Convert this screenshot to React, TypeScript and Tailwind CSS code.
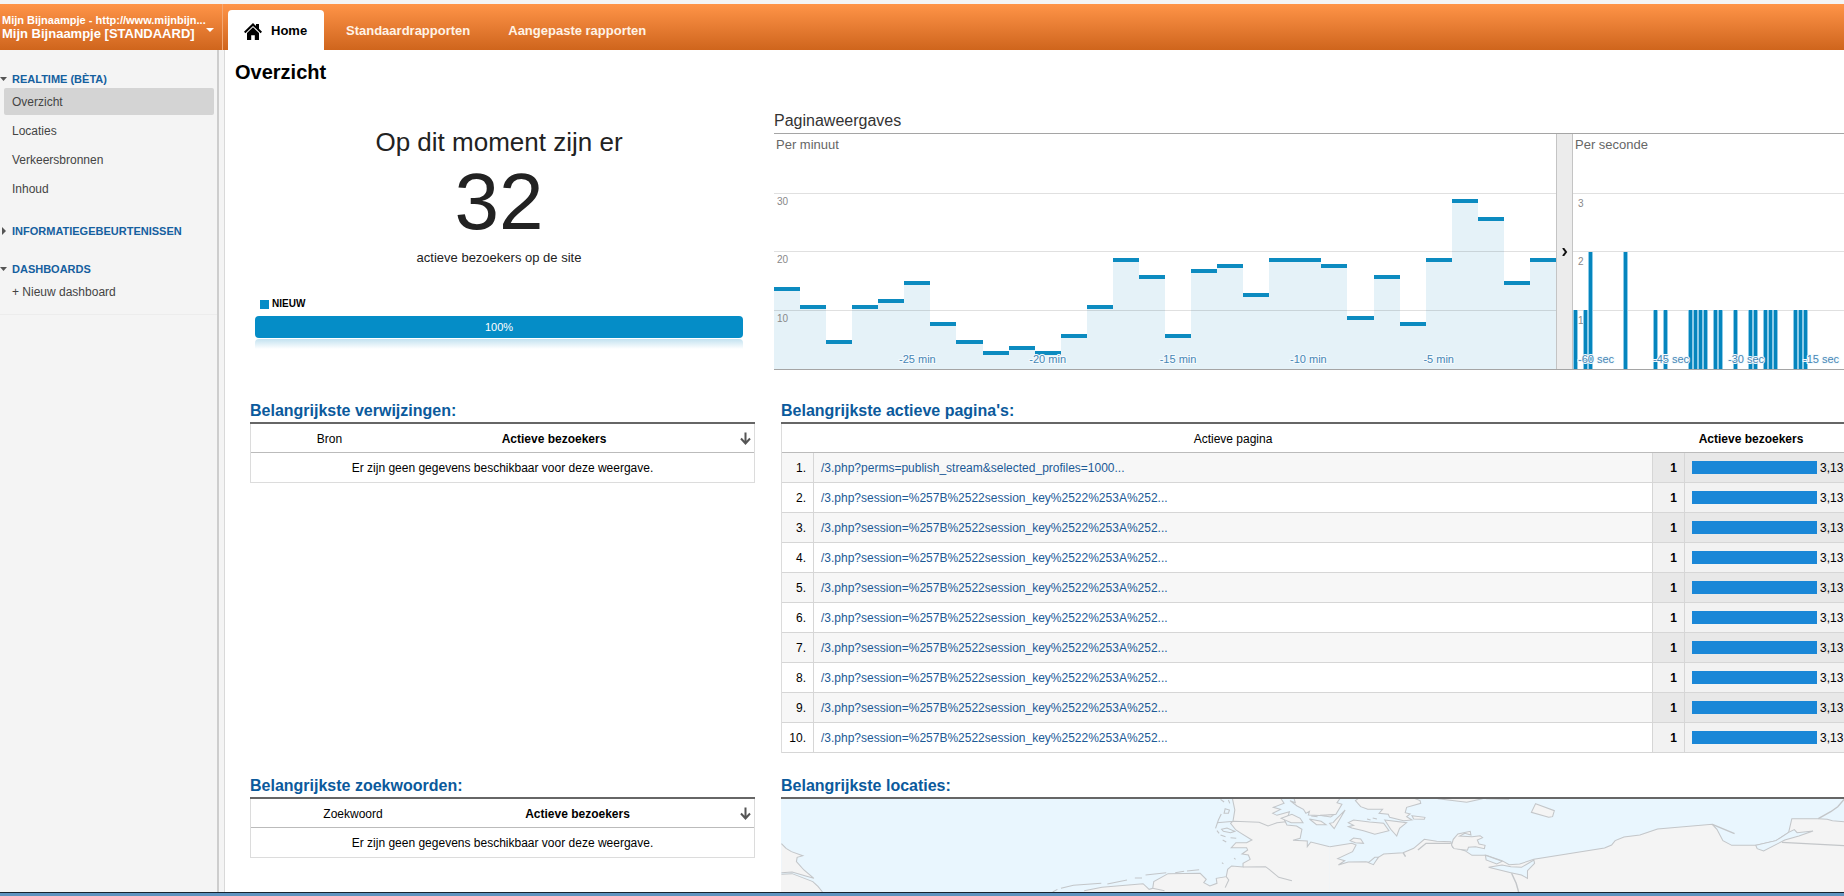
import type { ReactNode } from 'react';

const PER_MINUTE = [
  14, 11, 5, 11, 12, 15, 8, 5, 3, 4, 3, 6, 11, 19, 16,
  6, 17, 18, 13, 19, 19, 18, 9, 16, 8, 19, 29, 26, 15, 19,
];

// [second slot, views]
const PER_SECOND: [number, number][] = [
  [0, 1], [2, 1], [3, 2], [10, 2], [16, 1], [18, 1], [23, 1], [24, 1], [25, 1], [26, 1],
  [28, 1], [29, 1], [32, 1], [35, 1], [36, 1], [38, 1], [39, 1], [40, 1], [44, 1], [45, 1], [46, 1],
];

const SESSION_URL = '/3.php?session=%257B%2522session_key%2522%253A%252...';
const PAGES = ['/3.php?perms=publish_stream&selected_profiles=1000...', ...Array<string>(9).fill(SESSION_URL)];

const CHART_H = 235;
const GRID_Y  = [59, 117, 176];

/* ─── Header ─── */

function HomeIcon() {
  return (
    <svg width="18" height="17" viewBox="0 0 18 17" aria-hidden="true">
      <path d="M9 0 12 2.900V1h3v4.800l3 2.900-1.400 1.500L9 2.900 1.400 10.200 0 8.700z" fill="#000" />
      <path d="M9 4.200 15 10v7h-4.200v-4.800H7.200V17H3v-7z" fill="#000" />
    </svg>
  );
}

function Header() {
  return (
    <header className="flex h-[46px] bg-linear-to-b from-[#ff9447] to-[#cf651c] text-white">
      <button className="flex w-[223px] shrink-0 items-center border-r border-[#f3a873] pt-[2px] pl-[2px] text-left font-bold">
        <span className="whitespace-nowrap">
          <span className="block text-[11px] leading-3">Mijn Bijnaampje - http://www.mijnbijn...</span>
          <span className="block text-[13px] leading-4">Mijn Bijnaampje [STANDAARD]</span>
        </span>
        <svg className="mt-1" width="8" height="4" viewBox="0 0 8 4" aria-hidden="true"><path d="M0 0h8L4 4z" fill="#fff" /></svg>
      </button>
      <nav className="flex items-end pl-[5px] text-[13px] font-bold">
        <a href="#home" className="flex h-10 w-24 items-center gap-[9px] rounded-t bg-white pt-[2px] pl-4 text-black">
          <HomeIcon />
          Home
        </a>
        <a href="#standaard" className="flex h-10 items-center pt-[2px] pl-[22px] text-[#fff3e6]">Standaardrapporten</a>
        <a href="#aangepast" className="flex h-10 items-center pt-[2px] pl-[38px] text-[#fff3e6]">Aangepaste rapporten</a>
      </nav>
    </header>
  );
}

/* ─── Sidebar ─── */

function SidebarHeading({ open, children }: { open?: boolean; children: ReactNode }) {
  return (
    <button className="flex h-[18px] w-full items-center text-left text-[11px] font-bold text-[#15609f]">
      <svg className="w-3 shrink-0" height="8" viewBox="0 0 12 8" aria-hidden="true">
        <path d={open ? 'M0 2h7L3.500 6z' : 'M2 0v8l4-4z'} fill="#555" />
      </svg>
      {children}
    </button>
  );
}

function Sidebar() {
  return (
    <aside className="flex w-[225px] shrink-0 border-r border-[#d9d9d9] bg-[#f4f4f4]">
      <div className="w-[217px] pt-5 text-[#444]">
        <SidebarHeading open>REALTIME (BÈTA)</SidebarHeading>
        <ul className="text-xs">
          {['Overzicht', 'Locaties', 'Verkeersbronnen', 'Inhoud'].map((item, i) => (
            <li key={item} className="mb-[2px] pr-[3px] pl-1">
              <a
                href={`#${item}`}
                className={`block h-[27px] rounded-xs pl-2 leading-[28px] ${i === 0 ? 'bg-[#d4d4d4]' : ''}`}
              >
                {item}
              </a>
            </li>
          ))}
        </ul>
        <div className="mt-5"><SidebarHeading>INFORMATIEGEBEURTENISSEN</SidebarHeading></div>
        <div className="mt-5"><SidebarHeading open>DASHBOARDS</SidebarHeading></div>
        <a href="#nieuw" className="block border-b border-[#ececec] pb-2 pl-3 text-xs leading-[28px]">+ Nieuw dashboard</a>
      </div>
      <div className="w-[2px] bg-[#cdcdcd]" />
    </aside>
  );
}

/* ─── Realtime widgets ─── */

function ActiveVisitors() {
  return (
    <section className="pt-[17px] pr-3 pl-[5px] text-center text-[#222]">
      <p className="text-[26px] leading-8">Op dit moment zijn er</p>
      <p className="mt-1 text-[80px] leading-[80px]">32</p>
      <p className="mt-[6px] text-[13px] leading-5">actieve bezoekers op de site</p>
      <div className="mt-7 flex items-center gap-[3px] pl-[5px] text-[10px] leading-4 font-bold text-black">
        <span className="h-[9px] w-[9px] bg-[#058dc7]" />
        NIEUW
      </div>
      <div className="mt-1 h-[22px] rounded bg-[#058dc7] text-[11px] leading-[22px] text-white">100%</div>
      <div className="mt-px h-[10px] rounded-t bg-linear-to-b from-[#c3e2f0] to-white" />
    </section>
  );
}

function GridLines({ labels, labelX, labelY }: { labels: string[]; labelX: number; labelY: number }) {
  return (
    <>
      {GRID_Y.map((y, i) => (
        <g key={y}>
          <rect x="0" y={y} width="100%" height="1" fill="#000" fillOpacity="0.12" />
          <text x={labelX} y={y + labelY} fill="#888" className="text-[10px]">{labels[i]}</text>
        </g>
      ))}
    </>
  );
}

function AxisLabel({ x, anchor, children }: { x: number; anchor: 'middle' | 'start'; children: string }) {
  return (
    <text
      x={x} y={229} textAnchor={anchor} fill="#4686b5"
      stroke="#f4fafd" strokeWidth="2" paintOrder="stroke" className="text-[11px]"
    >
      {children}
    </text>
  );
}

function MinuteChart() {
  const barW = 782 / 30;
  return (
    <svg width="782" height={CHART_H} className="block" role="img" aria-label="Per minuut">
      {PER_MINUTE.map((v, i) => {
        const x = Math.round(i * barW);
        const w = Math.round((i + 1) * barW) - x;
        const y = Math.round(CHART_H - v * 5.86);
        return (
          <g key={i}>
            <rect x={x} y={y} width={w} height={CHART_H - y} fill="#e5f2f8" />
            <rect x={x} y={y} width={w} height="4" fill="#0c8bc0" />
          </g>
        );
      })}
      <GridLines labels={['30', '20', '10']} labelX={3} labelY={12} />
      {[25, 20, 15, 10, 5].map(m => (
        <AxisLabel key={m} x={(30.5 - m) * barW} anchor="middle">{`-${m} min`}</AxisLabel>
      ))}
    </svg>
  );
}

function SecondChart() {
  return (
    <svg width="100%" height={CHART_H} className="block" role="img" aria-label="Per seconde">
      <GridLines labels={['3', '2', '1']} labelX={5} labelY={14} />
      {PER_SECOND.map(([slot, v]) => {
        const y = Math.round(CHART_H - v * 58.6);
        return (
          <g key={slot}>
            <rect x={slot * 5} y={y} width="5" height={CHART_H - y} fill="#8ccbe8" />
            <rect x={slot * 5 + 1} y={y} width="3" height={CHART_H - y} fill="#0585bd" />
          </g>
        );
      })}
      {[60, 45, 30, 15].map(s => (
        <AxisLabel key={s} x={5 + (60 - s) * 5} anchor="start">{`-${s} sec`}</AxisLabel>
      ))}
    </svg>
  );
}

function PageViews() {
  return (
    <section className="min-w-0">
      <h2 className="text-base leading-6 text-[#333]">Paginaweergaves</h2>
      <div className="flex border-y border-[#a5a5a5] text-[13px] leading-[22px] text-[#666]">
        <div className="relative shrink-0">
          <MinuteChart />
          <h3 className="absolute top-0 left-[2px]">Per minuut</h3>
        </div>
        <button
          aria-label="Grafiek verschuiven"
          className="flex w-[17px] shrink-0 items-center justify-center border-x border-[#c4c4c4] bg-[#ececec]"
        >
          <svg width="6" height="8" viewBox="0 0 6 8" aria-hidden="true">
            <path d="M1 0 4 4 1 8" fill="none" stroke="#111" strokeWidth="2" />
          </svg>
        </button>
        <div className="relative min-w-0 flex-1">
          <SecondChart />
          <h3 className="absolute top-0 left-[2px]">Per seconde</h3>
        </div>
      </div>
    </section>
  );
}

/* ─── Tables ─── */

function SectionTitle({ children }: { children: ReactNode }) {
  return (
    <h2 className="border-b-2 border-[#666] pt-[2px] text-base leading-[22px] font-bold text-[#0b5a9c]">{children}</h2>
  );
}

function EmptyTable({ title, column, columnClass }: { title: string; column: string; columnClass: string }) {
  return (
    <section>
      <SectionTitle>{title}</SectionTitle>
      <table className="w-full table-fixed border-separate border-spacing-0 border-x border-[#dcdcdc] text-center text-xs">
        <thead>
          <tr className="h-[29px]">
            <th className={`border-b border-[#bbb] p-0 pt-px font-normal ${columnClass}`}>{column}</th>
            <th className="relative border-b border-[#bbb] pt-px pr-[54px] pb-0 pl-0 font-bold">
              Actieve bezoekers
              <svg className="absolute top-2 right-[3px]" width="11" height="13" viewBox="0 0 11 13" aria-hidden="true">
                <path d="M5.500 0.500v11M1 6.500l4.500 5 4.500-5" fill="none" stroke="#555" strokeWidth="2" />
              </svg>
            </th>
          </tr>
        </thead>
        <tbody>
          <tr className="h-[30px]">
            <td colSpan={2} className="border-b border-[#dcdcdc] p-0">Er zijn geen gegevens beschikbaar voor deze weergave.</td>
          </tr>
        </tbody>
      </table>
    </section>
  );
}

function ActivePages() {
  return (
    <section className="min-w-0">
      <SectionTitle>Belangrijkste actieve pagina's:</SectionTitle>
      <div className="overflow-hidden">
        <table className="w-full min-w-[1124px] table-fixed border-separate border-spacing-0 border-x border-[#dcdcdc] text-xs">
          <colgroup>
            <col className="w-8" />
            <col />
            <col className="w-[33px]" />
            <col className="w-[219px]" />
          </colgroup>
          <thead>
            <tr className="h-[29px]">
              <th className="border-b border-[#bbb] p-0" />
              <th className="border-b border-[#bbb] p-0 pt-px font-normal">Actieve pagina</th>
              <th colSpan={2} className="border-b border-[#bbb] pt-px pr-[54px] pb-0 pl-0">Actieve bezoekers</th>
            </tr>
          </thead>
          <tbody className="[&_td]:border-b [&_td]:border-[#d6d6d6]">
            {PAGES.map((url, i) => {
              const odd = i % 2 === 0;
              const metric = odd ? 'bg-[#e8e8e8]' : 'bg-[#f2f2f2]';
              return (
                <tr key={i} className={`h-[30px] ${odd ? 'bg-[#f7f7f7]' : 'bg-white'}`}>
                  <td className="border-r py-0 pr-[7px] pl-0 text-right">{i + 1}.</td>
                  <td className="py-0 pr-0 pl-[7px]"><a href={`#page-${i + 1}`} className="text-[#1c5a96]">{url}</a></td>
                  <td className={`border-x py-0 pr-[7px] pl-0 text-right font-bold ${metric}`}>1</td>
                  <td className={`py-0 pr-0 pl-[7px] ${metric}`}>
                    <div className="flex items-center gap-[3px]">
                      <span className="h-[13px] w-[125px] bg-[#1a87d7]" />
                      3,13
                    </div>
                  </td>
                </tr>
              );
            })}
          </tbody>
        </table>
      </div>
    </section>
  );
}

/* ─── Map ─── */

const BRITAIN   = 'M32 221 45 235 60 245 92 257 76 262 74 275 95 300 123 325 100 318 62 306 32 308';
const KENT      = 'M32 313 62 311 120 335 135 350 147 366';
const WEST_LAND = 'M880 362 930 352 1045 341 1062 358 1072 355 1075 335 1115 311 1205 310 1222 328 1215 338 1232 348 1252 340 1250 325 1278 320 1282 298 1293 288 1325 291 1325 280 1345 268 1340 255 1322 252 1338 240 1335 233 1292 233 1305 218 1335 218 1350 210 1320 190 1305 180 1290 160 1297 153 1302 120 1295 84';
const EAST_LAND = 'M1430 84 1440 100 1410 112 1430 118 1408 130 1420 136 1455 125 1452 136 1440 148 1448 165 1475 168 1490 178 1485 205 1465 211 1505 213 1505 230 1515 216 1568 230';
const BALTIC    = 'M113 230 175 220 187 225 177 245 135 266 155 272 137 285 165 276 215 275 235 280 250 262 265 252 320 248 350 235 380 208 415 214 455 215 460 232 495 242 515 256 555 256 600 272 620 284 650 282 690 268 890 234 910 225 920 212 945 201 990 195 1040 177 1195 163 1208 178 1225 212 1250 226 1320 226 1375 212 1411 187 1420 146 1495 146 1520 148 1535 152 1568 155';

function LocationMap() {
  return (
    <svg viewBox="0 0 1063 93" preserveAspectRatio="xMinYMin slice" className="block h-[93px] w-full bg-[#e9f6fe]" role="img" aria-label="Kaart van locaties">
      <g transform="translate(-11 -29) scale(0.357 0.3333)">
        <g fill="#f4f4f4">
          <path d={BRITAIN} />
          <path d={`${KENT}V400H20V313z`} />
          <path d={`${WEST_LAND}H1430L${EAST_LAND.slice(1)}V400H880z`} />
        </g>
        <g fill="none" stroke="#c3c6c9" strokeWidth="3">
          <path d={BRITAIN} />
          <path d={KENT} />
          <path d={WEST_LAND} />
          <path d={EAST_LAND} />
          <path d="M1325 291 1388 290 1400 300 1425 322 1462 332M1278 320 1285 330 1275 353M1072 355 1105 362" />
          <path d="M1252 158 1300 154 1370 157 1395 168 1420 158 1445 155" />
          <path d="M792 366 805 358M815 355 850 346 928 340M945 342 1000 330M1022 324 1042 324M1052 315 1110 308M1135 308 1160 304M1168 303 1202 299" />
          <path d="M1262 88 1272 96M1284 90 1288 100M1275 116 1287 120 1284 130 1272 130zM1264 132 1256 150 1248 175M1252 182 1258 190M1265 178 1280 174 1302 184 1290 188 1270 184zM1262 195 1276 200M1290 203 1306 205M1268 210 1278 216M1300 264 1304 268M1266 278 1270 282" />
        </g>
        <path d="M1432 145 1462 133 1485 145 1493 158 1460 158z" fill="#f4f4f4" stroke="#c3c6c9" strokeWidth="3" />
      </g>
      <g transform="translate(509 -29) scale(0.3534 0.3333)" strokeWidth="3">
        <path d={`${BALTIC}H1600V400H113z`} fill="#f4f4f4" />
        <path d={BALTIC} fill="none" stroke="#c3c6c9" />
        <g fill="#f4f4f4" stroke="#c3c6c9">
          <path d="M10 80 15 98 0 92 20 108 38 118 45 130 55 124 52 135 100 137 130 133 147 103 133 98 145 80" />
          <path d="M200 80 185 92 200 110 220 118 262 118 252 130 278 133 282 142 322 152 345 150 330 140 340 132 326 128 330 112 370 100 368 92 340 80" />
          <path d="M165 158 180 150 225 156 265 160 280 182 240 193 208 182 175 174 165 170 180 166z" />
          <path d="M268 150 330 158 310 175 302 198 285 178z" />
          <path d="M156 120 125 176 112 160 122 158 130 148zM345 137 382 142 380 148 350 147zM55 147 88 154 102 164 75 164zM85 136 125 134 115 141zM60 138 78 140M218 147 228 150M234 144 246 147" />
          <path d="M170 212 180 204 200 207 208 220 185 218z" />
          <path d="M457 225 462 208 475 192 510 184 512 195 495 190 480 198 515 200 538 197 545 203 530 210 535 222 552 226 550 236 525 230 505 232 502 241 464 236z" />
          <path d="M695 101 748 122 743 140 732 142 683 127z" />
          <path d="M418 86 500 97 545 86M555 86 620 88" />
        </g>
        <g fill="#e9f6fe" stroke="#c3c6c9">
          <path d="M562 292 600 285 625 290 655 292 690 270 692 280 672 302 672 325 655 315 625 308z" />
          <path d="M553 256 600 274 585 282 555 270zM240 262 250 262 236 284 222 278z" />
          <path d="M1318 226 1375 212 1411 187 1427 179 1435 188 1480 183 1440 198 1400 210 1340 243 1322 236z" />
        </g>
        <path d="M627 310 640 340 648 370M1195 163 1258 191M1392 217 1568 227M1495 146 1530 125 1550 110 1568 88M362 240 385 220 455 220M320 248 327 260" fill="none" stroke="#c3c6c9" strokeWidth="4" />
      </g>
    </svg>
  );
}

export default function App() {
  return (
    <div className="flex min-h-screen flex-col overflow-hidden bg-white pt-1 font-['Liberation_Sans',Arial,sans-serif] text-black shadow-[inset_0_4px_0_#f4f4f4]">
      <Header />
      <div className="flex flex-1">
        <Sidebar />
        <main className="min-w-0 flex-1">
          <h1 className="pt-2 pl-[10px] text-xl leading-7 font-bold">Overzicht</h1>
          <div className="mt-[23px] grid grid-cols-[505px_minmax(0,1fr)] gap-x-[19px] pl-[25px]">
            <ActiveVisitors />
            <PageViews />
          </div>
          <div className="mt-7 grid grid-cols-[505px_minmax(0,1fr)] gap-x-[26px] gap-y-5 pl-[25px]">
            <EmptyTable title="Belangrijkste verwijzingen:" column="Bron" columnClass="w-[157px]" />
            <ActivePages />
            <EmptyTable title="Belangrijkste zoekwoorden:" column="Zoekwoord" columnClass="w-[204px]" />
            <section className="min-w-0">
              <SectionTitle>Belangrijkste locaties:</SectionTitle>
              <LocationMap />
            </section>
          </div>
        </main>
      </div>
      <footer className="h-1 border-t border-[#16222e] bg-[#5f93bf]" />
    </div>
  );
}
